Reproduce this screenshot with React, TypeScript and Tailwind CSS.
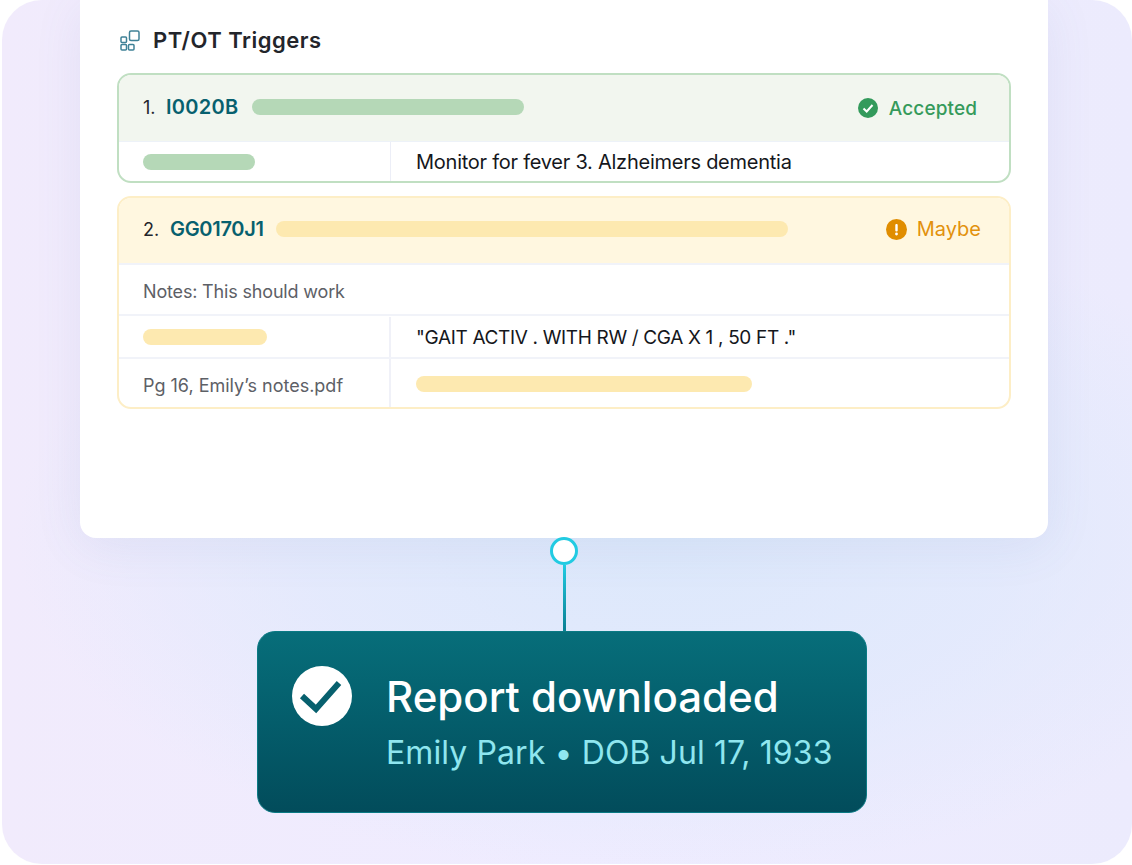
const font = { fontFamily: '"Inter", "Open Sans", sans-serif' };

function TriggersIcon() {
  return (
    <svg width="22" height="22" viewBox="0 0 22 22" fill="none" stroke="#3f8197" strokeWidth="1.5">
      <rect x="2" y="8" width="5.5" height="5.5" rx="1" />
      <rect x="2" y="15.5" width="5.5" height="5.5" rx="1" />
      <rect x="9.5" y="15.5" width="5.5" height="5.5" rx="1" />
      <rect x="10.5" y="2" width="9.5" height="9.5" rx="1.5" />
    </svg>
  );
}

function Bar({ className }: { className: string }) {
  return <div className={`h-4 rounded-full ${className}`} />;
}

export default function App() {
  return (
    <div className="w-[1132px] h-[865px] bg-white pl-[2px] pb-px overflow-hidden" style={font}>
      <div className="h-full w-full rounded-[40px] overflow-hidden pl-[78px] bg-[radial-gradient(ellipse_640px_340px_at_58%_62%,#dce8fb_0%,rgba(224,233,252,0.75)_55%,rgba(240,237,255,0)_100%),linear-gradient(90deg,#f1ebfc_0%,#efecff_50%,#ecebfd_100%)]">
        <div className="w-[968px] h-[538px] bg-white rounded-b-2xl shadow-[0_8px_50px_rgba(90,110,170,0.09)] px-[37px] pt-[28px]">
          <div className="flex items-center gap-[12px] h-[24px] pl-[2px]">
            <TriggersIcon />
            <h2 className="text-[22px] font-semibold text-[#23252b] leading-none tracking-[0.5px]">PT/OT Triggers</h2>
          </div>

          <div className="mt-[21px] rounded-[14px] border-2 border-[#c0dfc2] overflow-hidden">
            <div className="h-[66px] bg-[#f2f6ef] flex items-center pl-[24px] pr-[32px] pb-[2px]">
              <span className="text-[18px] text-[#23252b] w-[23px]">1.</span>
              <span className="text-[20px] font-semibold text-[#07606e] w-[86px] tracking-[0.3px]">I0020B</span>
              <Bar className="w-[272px] bg-[#b5d8b7]" />
              <div className="ml-auto flex items-center gap-[11px] mt-[2px]">
                <svg width="20" height="20" viewBox="0 0 20 20">
                  <circle cx="10" cy="10" r="10" fill="#339a5b" />
                  <path d="M5.5 10.5 8.7 13.5 14.5 7" fill="none" stroke="#fff" strokeWidth="2" />
                </svg>
                <span className="text-[19px] font-medium text-[#359a5b] leading-none tracking-[0.1px]">Accepted</span>
              </div>
            </div>
            <div className="h-[40px] flex border-t border-[#edf2f8]">
              <div className="w-[272px] flex items-center pl-[24px] border-r border-[#eceef7]">
                <Bar className="w-[112px] bg-[#b5d8b7]" />
              </div>
              <div className="flex items-center pl-[25px] text-[20px] text-[#15171c] tracking-[-0.25px]">
                Monitor for fever 3. Alzheimers dementia
              </div>
            </div>
          </div>

          <div className="mt-[13px] rounded-[14px] border-2 border-[#fdeec6] overflow-hidden">
            <div className="h-[65px] bg-[#fff7e0] flex items-center pl-[24px] pr-[28px] pb-[3px]">
              <span className="text-[18px] text-[#23252b] w-[27px]">2.</span>
              <span className="text-[20px] font-semibold text-[#07606e] w-[106px] tracking-[-0.3px]">GG0170J1</span>
              <Bar className="w-[512px] bg-[#fde9b0]" />
              <div className="ml-auto flex items-center gap-[10px]">
                <svg width="21" height="21" viewBox="0 0 21 21">
                  <circle cx="10.5" cy="10.5" r="10.5" fill="#e08d00" />
                  <rect x="9.3" y="5" width="2.4" height="7.4" rx="1" fill="#fff" />
                  <circle cx="10.5" cy="15" r="1.4" fill="#fff" />
                </svg>
                <span className="text-[20px] text-[#e2910c] leading-none">Maybe</span>
              </div>
            </div>
            <div className="h-[53px] flex items-center pl-[24px] pt-[3px] border-t-2 border-b-2 border-[#f1f3f9] text-[18px] text-[#5d6066] tracking-[-0.17px]">
              Notes: This should work
            </div>
            <div className="h-[43px] flex pt-px border-b-2 border-[#f1f3f9]">
              <div className="w-[272px] flex items-center pl-[24px] border-r-2 border-[#f0f1f8]">
                <Bar className="w-[124px] bg-[#fde9b0]" />
              </div>
              <div className="flex items-center pl-[25px] pt-[3px] text-[19px] text-[#15171c] tracking-[-0.34px]">
                "GAIT ACTIV . WITH RW / CGA X 1 , 50 FT ."
              </div>
            </div>
            <div className="h-[48px] flex">
              <div className="w-[272px] flex items-center pl-[24px] pt-[5px] border-r-2 border-[#f0f1f8] text-[18px] text-[#5d6066]">
                Pg 16, Emily’s notes.pdf
              </div>
              <div className="flex items-center pl-[25px] pt-px">
                <Bar className="w-[336px] bg-[#fde9b0]" />
              </div>
            </div>
          </div>
        </div>

        <div className="w-[610px] ml-[177px]">
          <div className="flex flex-col items-center w-[28px] ml-[293px] -mt-px">
            <div className="w-[28px] h-[28px] rounded-full bg-white border-[3px] border-[#22cbe2] shrink-0" />
            <div className="w-[3px] h-[66px] bg-gradient-to-b from-[#22cbe2] to-[#0a7f92]" />
          </div>
          <div className="h-[182px] rounded-[18px] border border-[#0a7a84] bg-gradient-to-b from-[#076e7a] via-[#045d6b] to-[#024c5b] flex pl-[34px] pt-[34px]">
            <svg width="60" height="60" viewBox="0 0 60 60" className="shrink-0">
              <circle cx="30" cy="30" r="30" fill="#fff" />
              <path d="M10 30 24 43 47 17" fill="none" stroke="#07606e" strokeWidth="6" />
            </svg>
            <div className="ml-[34px]">
              <div className="text-[42px] font-medium text-white leading-[58px] mt-[2px]">Report downloaded</div>
              <div className="text-[32px] text-[#8fe6ef] leading-[40px] mt-[7px] tracking-[0.1px]">Emily Park • DOB Jul 17, 1933</div>
            </div>
          </div>
        </div>
      </div>
    </div>
  );
}
